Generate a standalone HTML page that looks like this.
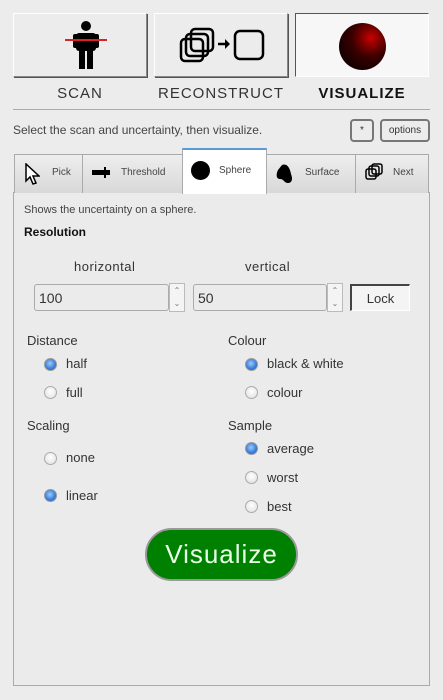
<!DOCTYPE html>
<html><head><style>
*{box-sizing:border-box;margin:0;padding:0}
body{width:443px;height:700px;background:#ececec;font-family:"Liberation Sans",sans-serif;color:#333;position:relative;overflow:hidden}
.a{position:absolute}
.big{top:13px;width:134px;height:64px;background:#ececec;border:1px solid #888;border-top-color:#fff;border-left-color:#fff;box-shadow:1px 1px 0 #555}
.lbl{top:85px;font-size:15px;letter-spacing:1px;text-align:center;width:134px;color:#333}
.tab{top:154px;height:39px;border:1px solid #aaa;border-bottom:none;background:linear-gradient(#eee,#d8d8d8);font-size:10px;color:#444}
.t{font-size:13px;color:#333}
.rad{width:13px;height:13px;border-radius:50%;border:1px solid #aaa;background:radial-gradient(circle at 50% 40%,#fff,#ddd)}
.on{background:radial-gradient(circle at 45% 40%,#9cf,#3a7bd5 60%,#2a5fb0);border-color:#999}
.inp{top:284px;height:27px;border:1px solid #aaa;border-radius:3px;background:#ebebeb;font-size:14px;padding:5px 0 0 4px}
.spin{top:283px;width:16px;height:29px;border:1px solid #bbb;background:#f4f4f4;font-size:8px;color:#777;text-align:center;line-height:13px}
.sb{display:flex;align-items:center;justify-content:center}
</style></head><body>
<div class="a big" style="left:13px">
<svg class="a" style="left:50px;top:6px" width="44" height="50" viewBox="0 0 44 50"><circle cx="22" cy="6" r="5" fill="#000"/><rect x="12" y="13" width="20" height="18" rx="3" fill="#000"/><rect x="9" y="14" width="5" height="14" rx="2" fill="#000"/><rect x="30" y="14" width="5" height="14" rx="2" fill="#000"/><rect x="15" y="29" width="6" height="20" fill="#000"/><rect x="23" y="29" width="6" height="20" fill="#000"/><line x1="1" y1="20" x2="43" y2="20" stroke="#d22" stroke-width="2"/></svg></div>
<div class="a big" style="left:154px">
<svg class="a" style="left:24px;top:13px" width="90" height="40" viewBox="0 0 90 40"><g fill="none" stroke="#000" stroke-width="2.5"><rect x="2" y="12" width="22" height="22" rx="4"/><rect x="7" y="7" width="22" height="22" rx="4"/><rect x="12" y="2" width="22" height="22" rx="4"/><rect x="56" y="4" width="28" height="28" rx="5"/></g><path d="M39 17h8" stroke="#000" stroke-width="2.5"/><path d="M46 12l5 5-5 5z" fill="#000"/></svg></div>
<div class="a big" style="left:295px;background:#f7f7f7;border-color:#555 #fff #fff #555;box-shadow:none">
<div class="a" style="left:43px;top:9px;width:47px;height:47px;border-radius:50%;background:radial-gradient(circle at 68% 32%,#c00 0,#800 18%,#3a0000 42%,#1a0000 70%,#100000)"></div></div>
<div class="a lbl" style="left:13px">SCAN</div>
<div class="a lbl" style="left:154px">RECONSTRUCT</div>
<div class="a lbl" style="left:295px;font-weight:bold;color:#111">VISUALIZE</div>
<div class="a" style="left:13px;top:109px;width:417px;height:1px;background:#aaa"></div>
<div class="a" style="left:13px;top:123px;font-size:12px;color:#444">Select the scan and uncertainty, then visualize.</div>
<div class="a sb" style="left:350px;top:119px;width:24px;height:23px;border:2px solid #777;border-radius:4px;font-size:10px">*</div>
<div class="a sb" style="left:380px;top:119px;width:50px;height:23px;border:2px solid #777;border-radius:4px;font-size:10px">options</div>
<div class="a" style="left:13px;top:192px;width:417px;height:494px;border:1px solid #aaa;background:#ebebeb"></div>
<div class="a tab" style="left:14px;width:69px"><svg class="a" style="left:9px;top:8px" width="16" height="22" viewBox="0 0 16 22"><path d="M2 1v17l4-4 3 7 3-1-3-7h6z" fill="#fff" stroke="#000" stroke-width="1.5"/></svg><span class="a" style="left:37px;top:12px">Pick</span></div>
<div class="a tab" style="left:82px;width:101px"><svg class="a" style="left:9px;top:12px" width="20" height="12"><rect x="0" y="3" width="18" height="5" fill="#000"/><rect x="12" y="0" width="2" height="11" fill="#000"/></svg><span class="a" style="left:38px;top:12px">Threshold</span></div>
<div class="a tab" style="left:182px;top:148px;height:46px;width:85px;background:#fff;border-top:2px solid #5b9bd5;border-color:#5b9bd5 #aaa"><div class="a" style="left:8px;top:11px;width:19px;height:19px;border-radius:50%;background:#000"></div><span class="a" style="left:36px;top:15px">Sphere</span></div>
<div class="a tab" style="left:266px;width:90px"><svg class="a" style="left:9px;top:8px" width="18" height="22" viewBox="0 0 18 22"><path d="M6 2c5-2 8 3 9 9 2 5 1 9-3 9s-4-4-8-4-4-5-2-9z" fill="#000"/></svg><span class="a" style="left:38px;top:12px">Surface</span></div>
<div class="a tab" style="left:355px;width:74px"><svg class="a" style="left:9px;top:8px" width="18" height="18" viewBox="0 0 18 18"><g fill="none" stroke="#000" stroke-width="1.5"><rect x="1" y="6" width="10" height="10" rx="2"/><rect x="4" y="3" width="10" height="10" rx="2"/><rect x="7" y="1" width="10" height="10" rx="2"/></g></svg><span class="a" style="left:37px;top:12px">Next</span></div>
<div class="a" style="left:24px;top:204px;font-size:11px;color:#444">Shows the uncertainty on a sphere.</div>
<div class="a" style="left:24px;top:225px;font-size:12px;font-weight:bold;color:#111">Resolution</div>
<div class="a t" style="left:74px;top:259px;letter-spacing:.5px">horizontal</div>
<div class="a t" style="left:245px;top:259px;letter-spacing:.5px">vertical</div>
<div class="a inp" style="left:34px;width:135px">100</div>
<div class="a spin" style="left:169px">⌃<br>⌄</div>
<div class="a inp" style="left:193px;width:134px">50</div>
<div class="a spin" style="left:327px">⌃<br>⌄</div>
<div class="a sb" style="left:350px;top:284px;width:60px;height:27px;border:1px solid #fff;border-left:2px solid #444;border-top:2px solid #444;background:#f4f4f4;font-size:13px">Lock</div>
<div class="a t" style="left:27px;top:333px">Distance</div>
<div class="a t" style="left:228px;top:333px">Colour</div>
<div class="a rad on" style="left:44px;top:358px"></div><div class="a t" style="left:66px;top:356px">half</div>
<div class="a rad" style="left:44px;top:386px"></div><div class="a t" style="left:66px;top:385px">full</div>
<div class="a rad on" style="left:245px;top:358px"></div><div class="a t" style="left:267px;top:356px">black &amp; white</div>
<div class="a rad" style="left:245px;top:386px"></div><div class="a t" style="left:267px;top:385px">colour</div>
<div class="a t" style="left:27px;top:418px">Scaling</div>
<div class="a t" style="left:228px;top:418px">Sample</div>
<div class="a rad" style="left:44px;top:452px"></div><div class="a t" style="left:66px;top:450px">none</div>
<div class="a rad on" style="left:44px;top:489px"></div><div class="a t" style="left:66px;top:488px">linear</div>
<div class="a rad on" style="left:245px;top:442px"></div><div class="a t" style="left:267px;top:441px">average</div>
<div class="a rad" style="left:245px;top:471px"></div><div class="a t" style="left:267px;top:470px">worst</div>
<div class="a rad" style="left:245px;top:500px"></div><div class="a t" style="left:267px;top:499px">best</div>
<div class="a" style="left:145px;top:528px;width:153px;height:53px;border-radius:27px;background:#008000;border:2px solid #999;color:#e8ffe8;font-size:26px;text-align:center;line-height:48px;letter-spacing:1px">Visualize</div>
</body></html>
